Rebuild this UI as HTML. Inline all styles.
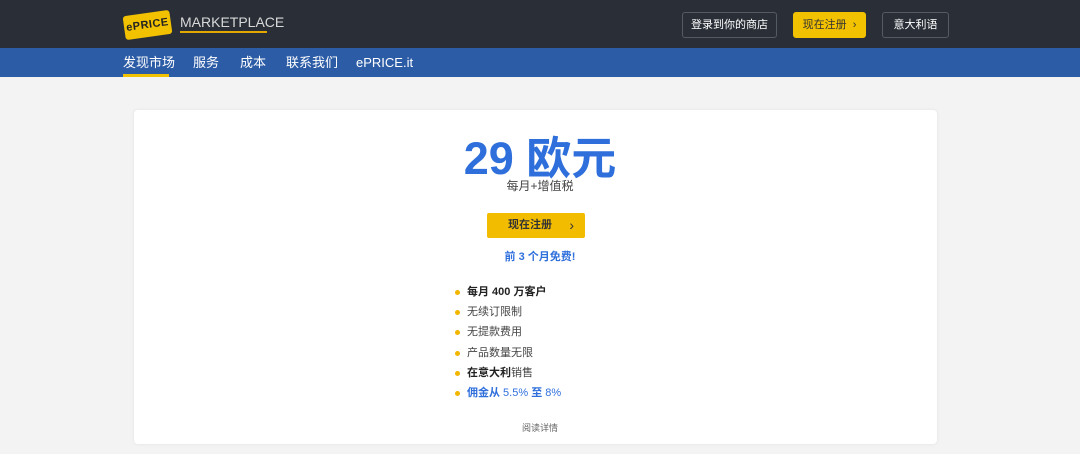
<!DOCTYPE html>
<html><head><meta charset="utf-8"><style>
*{margin:0;padding:0;box-sizing:border-box}
body{width:1080px;height:454px;background:#f3f3f3;font-family:"Liberation Sans","Noto Sans CJK SC",sans-serif;position:relative;overflow:hidden}
.top{position:absolute;left:0;top:0;width:1080px;height:48px;background:#2a2f37}
.nav{position:absolute;left:0;top:48px;width:1080px;height:29px;background:#2d5ca6}
.nav span{position:absolute;top:0;line-height:29px;height:29px;color:#fff;font-size:13px}
.logo{position:absolute;left:124px;top:13px;width:47px;height:24px;background:#f2c100;transform:rotate(-8deg);border-radius:3px;font-size:11px;font-weight:bold;color:#222;text-align:center;line-height:24px;letter-spacing:0.5px}
.mk{position:absolute;left:180px;top:14px;color:#d8d8d8;font-size:14px;line-height:17px}
.mkl{position:absolute;left:180px;top:31px;width:87px;height:2px;background:#e1a900}
.btn{position:absolute;top:12px;height:26px;border:1px solid #555b63;border-radius:3px;color:#fff;font-size:11px;line-height:24px;text-align:center}
.card{position:absolute;left:134px;top:110px;width:803px;height:334px;background:#fff;border-radius:4px;box-shadow:0 0 3px rgba(0,0,0,.08)}
.price{position:absolute;left:0;width:1080px;text-align:center;top:134px;height:50px;line-height:50px;font-size:45px;font-weight:bold;color:#2f6fdc}
.c{position:absolute;left:0;width:1080px;text-align:center}
.li{position:absolute;left:467px;font-size:11px;line-height:14px;color:#444}
.li:before{content:"";position:absolute;left:-12px;top:5px;width:5px;height:5px;border-radius:50%;background:#f2b600}
</style></head><body>
<div class="top"></div>
<div class="logo">ePRICE</div>
<div class="mk">MARKETPLACE</div><div class="mkl"></div>
<div class="btn" style="left:682px;width:95px">登录到你的商店</div>
<div class="btn" style="left:793px;width:73px;background:#f2c100;border-color:#f2c100;color:#333">现在注册 &nbsp;›</div>
<div class="btn" style="left:882px;width:67px">意大利语</div>
<div class="nav">
<span style="left:123px">发现市场</span>
<div style="position:absolute;left:123px;top:26px;width:46px;height:3px;background:#f2c100"></div>
<span style="left:193px">服务</span>
<span style="left:240px">成本</span>
<span style="left:286px">联系我们</span>
<span style="left:356px">ePRICE.it</span>
</div>
<div class="card"></div>
<div class="price">29 欧元</div>
<div class="c" style="top:178px;font-size:12px;line-height:16px;color:#444">每月+增值税</div>
<div style="position:absolute;left:487px;top:213px;width:98px;height:25px;background:#f2bc00;border-radius:2px;font-size:11px;font-weight:bold;color:#333;line-height:25px;padding-left:21px">现在注册<span style="position:absolute;right:11px;top:0;font-weight:normal;font-size:14px">›</span></div>
<div class="c" style="top:250px;font-size:11px;line-height:14px;font-weight:bold;color:#2f6fdc">前 3 个月免费!</div>
<div class="li" style="top:285px;font-weight:bold;color:#222">每月 400 万客户</div>
<div class="li" style="top:305px">无续订限制</div>
<div class="li" style="top:325px">无提款费用</div>
<div class="li" style="top:346px">产品数量无限</div>
<div class="li" style="top:366px"><b style="color:#222">在意大利</b>销售</div>
<div class="li" style="top:386px;color:#2f6fdc"><b>佣金从</b> 5.5% <b>至</b> 8%</div>
<div class="c" style="top:422px;font-size:9px;line-height:12px;color:#666">阅读详情</div>
</body></html>
